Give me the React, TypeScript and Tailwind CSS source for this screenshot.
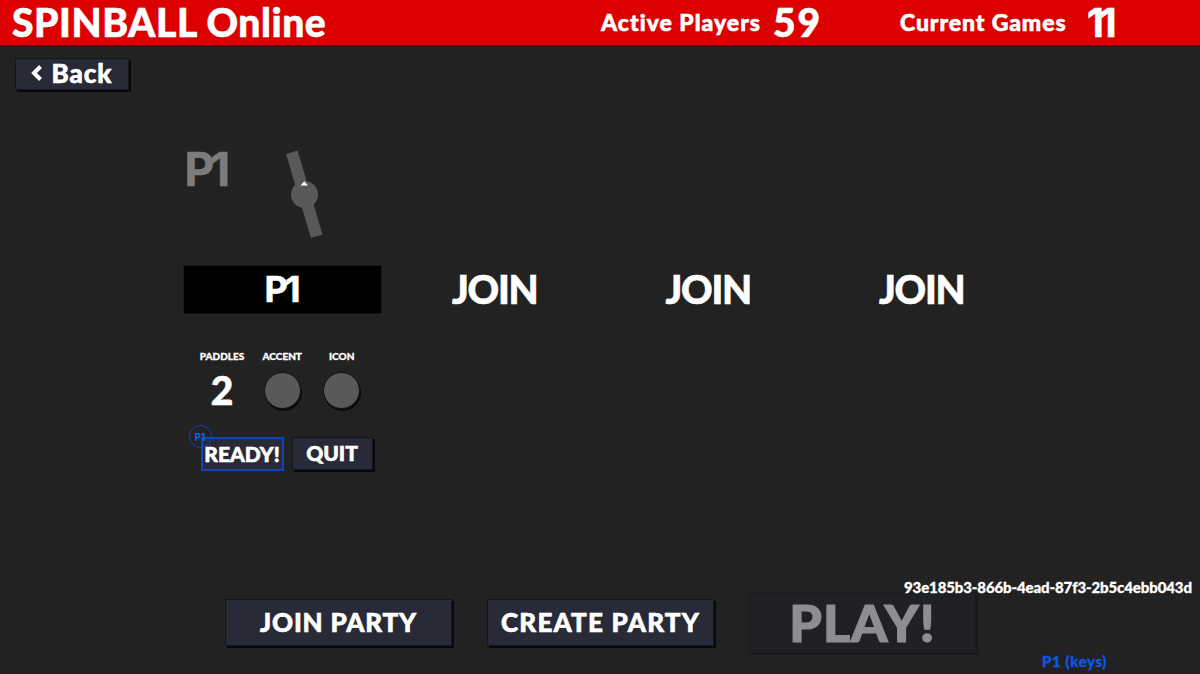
import { twMerge } from 'tailwind-merge'
import type { ReactNode } from 'react'

const OPEN_SLOTS = [2, 3, 4]

interface GameButtonProps {
  children: ReactNode
  className?: string
}

function GameButton({ children, className }: GameButtonProps) {
  return (
    <button
      className={twMerge(
        'flex shrink-0 items-center justify-center whitespace-nowrap border border-[#15161a] bg-[#282b37] font-black leading-none text-white shadow-[2px_2px_0_#08090c]',
        className
      )}
    >
      {children}
    </button>
  )
}

function PaddlePreview() {
  return (
    <svg width="42" height="92" viewBox="0 0 42 92" className="mt-[3px] ml-[54px]">
      <path d="M2 6 13.5 2.5 38.5 86.5 27 90Z" fill="#595959" />
      <circle cx="20.5" cy="46.5" r="13.5" fill="#595959" />
      <path d="M16.5 37.5h7.5l-3.7-4.2z" fill="#fff" />
    </svg>
  )
}

function Swatch({ label }: { label: string }) {
  return (
    <div className="flex w-[59.5px] flex-col items-center">
      <span className="text-[10px] leading-[12px] [-webkit-text-stroke:0.3px]">{label}</span>
      <span className="mt-[10px] size-[37px] rounded-full border border-[#111] bg-[#595959] shadow-[1px_2px_0_#0b0b0b]" />
    </div>
  )
}

function PlayerPanel() {
  return (
    <div className="flex w-[213px] flex-col items-center">
      <div className="flex h-[120px] w-[198px]">
        <span className="ml-[1px] w-[45px] font-['Inter'] text-[46px] font-bold leading-[48px] tracking-[-4px] text-[#7c7c7c]">
          P1
        </span>
        <PaddlePreview />
      </div>
      <div className="flex h-[49px] w-[199px] items-center justify-center border border-[#171717] bg-black pb-[1px] pr-[3px] font-['Inter'] text-[36px] font-bold leading-none tracking-[-3px]">
        P1
      </div>
      <div className="mt-[36px] flex h-[60px] w-[182px]">
        <div className="flex w-[61px] flex-col items-center">
          <span className="text-[10px] leading-[12px] [-webkit-text-stroke:0.3px]">PADDLES</span>
          <span className="mt-[8px] text-[39px] leading-[40px]">2</span>
        </div>
        <Swatch label="ACCENT" />
        <Swatch label="ICON" />
      </div>
      <div className="mt-[27px] ml-[8px] flex gap-[8px]">
        <div className="relative flex h-[34px] w-[83px] items-center justify-center border-2 border-[#0a47bd] bg-[#282b37] pb-[2px] text-[21px] leading-none">
          READY!
          <span className="absolute -left-[14px] -top-[14px] flex size-[23px] items-center justify-center rounded-full border border-[#0a47bd] font-['Inter'] text-[10px] font-bold text-[#0a62f0] [-webkit-text-stroke:0px]">
            P1
          </span>
        </div>
        <GameButton className="h-[33px] w-[81px] pb-[1px] text-[21px]">QUIT</GameButton>
      </div>
    </div>
  )
}

export default function App() {
  return (
    <div className="flex h-[674px] w-[1200px] flex-col overflow-hidden bg-[#222] font-['Lato','Open_Sans',sans-serif] font-black text-white [-webkit-text-stroke:0.6px]">
      <header className="flex h-[45px] shrink-0 items-center whitespace-nowrap bg-[#dc0000] pl-[12px] leading-none">
        <h1 className="w-[589px] text-[39px] tracking-[0.55px]">SPINBALL Online</h1>
        <span className="w-[172px] text-[23px] tracking-[1px]">Active Players</span>
        <span className="w-[127px] text-[39px] tracking-[2px]">59</span>
        <span className="w-[187px] text-[23px] tracking-[0.9px]">Current Games</span>
        <span className="font-['Inter'] text-[39px] font-bold tracking-[-4px]">11</span>
      </header>

      <nav className="h-[100px] shrink-0 pl-[15px] pt-[13px]">
        <GameButton className="h-[32px] w-[114px] gap-[9px] pb-[2px] text-[26px] tracking-[1px]">
          <svg width="11" height="16" viewBox="0 0 11 16" fill="none" stroke="#fff" strokeWidth="4">
            <path d="M9.5 1.5 3 8l6.5 6.5" />
          </svg>
          Back
        </GameButton>
      </nav>

      <main className="flex h-[437px] shrink-0 pl-[176px]">
        <PlayerPanel />
        {OPEN_SLOTS.map(slot => (
          <div
            key={slot}
            className="flex w-[213.5px] justify-center pr-[2px] pt-[124px] text-[39px] leading-[40px] tracking-[-1.2px]"
          >
            JOIN
          </div>
        ))}
      </main>

      <footer className="flex h-[92px] shrink-0 pl-[225px]">
        <div className="flex h-[80px] gap-[35px] pt-[10px]">
          <GameButton className="mt-[7px] h-[47px] w-[227px] text-[26px] tracking-[0.8px]">JOIN PARTY</GameButton>
          <GameButton className="mt-[7px] h-[47px] w-[227px] text-[26px] tracking-[1.2px]">CREATE PARTY</GameButton>
          <GameButton className="h-[61px] w-[227px] border-[#1b1c1f] bg-[#1f2127] pb-[2px] text-[52px] tracking-[1px] text-[#8d8e93] shadow-[2px_2px_0_#18191b] [-webkit-text-stroke:1.2px]">
            PLAY!
          </GameButton>
        </div>
        <div className="relative -ml-[72px] flex w-[290px] shrink-0 flex-col whitespace-nowrap leading-none [-webkit-text-stroke:0.3px]">
          <span className="-mt-[2px] text-[15px] tracking-[-0.12px]">93e185b3-866b-4ead-87f3-2b5c4ebb043d</span>
          <span className="mt-[59px] pl-[138px] text-[15px] tracking-[0.6px] text-[#0c58e8]">P1 (keys)</span>
        </div>
      </footer>
    </div>
  )
}
